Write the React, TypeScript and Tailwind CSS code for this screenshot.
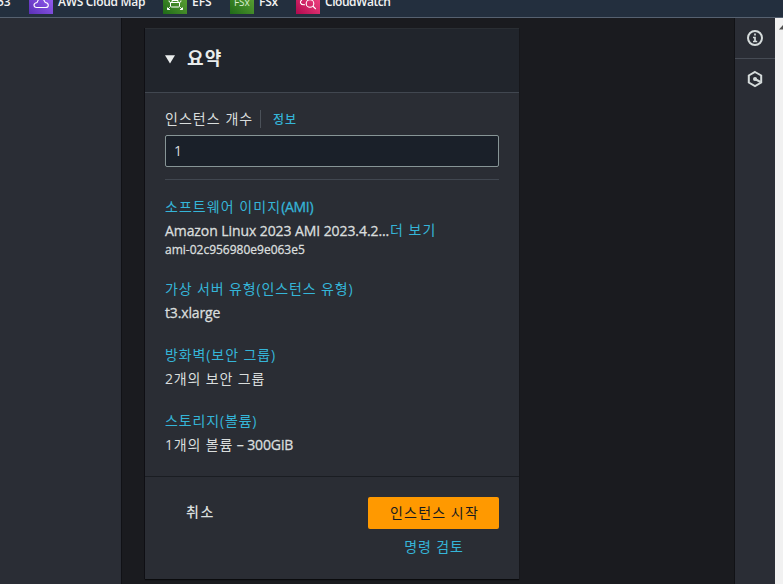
import React from "react";

const latin = "font-['Open_Sans','Noto_Sans_CJK_KR',sans-serif]";
const hangul = "font-['Noto_Sans_CJK_KR',sans-serif]";
const sturdy = "[-webkit-text-stroke:0.3px_currentColor]";

function CloudMapIcon() {
  return (
    <svg width="24" height="24" viewBox="0 0 24 24" fill="none" stroke="#fff" strokeWidth="1.1">
      <defs>
        <linearGradient id="purple" x1="0" y1="1" x2="1" y2="0">
          <stop stopColor="#5a30b5" />
          <stop offset="1" stopColor="#a066ff" />
        </linearGradient>
      </defs>
      <rect width="24" height="24" fill="url(#purple)" stroke="none" />
      <path d="M9.500 9.500 8 12.500c-2 .4-3 1.300-3 2.600 0 1.500 1 2.400 2.700 2.400h9c1.600 0 2.600-.9 2.600-2.300 0-1.500-1-2.500-3-2.700l-1.800-3" />
    </svg>
  );
}

function EfsIcon() {
  return (
    <svg width="24" height="24" viewBox="0 0 24 24" fill="none" stroke="#fff" strokeWidth="1">
      <rect width="24" height="24" fill="url(#green)" stroke="none" />
      <path d="M7.500 12.500v3.500q0 1 1 1h7q1 0 1-1v-3.500zM6 10.500q0 2 1.500 2M18 10.500q0 2-1.500 2M9 10.500h6v2M9 10.500v2M4.500 17.500v2H7M4.500 19.500l2.300-2.300M19.500 17.500v2H17M19.500 19.500l-2.300-2.300" />
    </svg>
  );
}

function FsxIcon() {
  return (
    <div className="relative h-6 w-6">
      <svg width="24" height="24" viewBox="0 0 24 24">
        <defs>
          <linearGradient id="green" x1="0" y1="1" x2="1" y2="0">
            <stop stopColor="#1f6a18" />
            <stop offset="1" stopColor="#66aa38" />
          </linearGradient>
        </defs>
        <rect width="24" height="24" fill="url(#green)" />
      </svg>
      <span className="absolute left-[4px] top-[3px] text-[10px] leading-[18px] tracking-[-0.1px] text-[#d9edcf]">FSx</span>
    </div>
  );
}

function CloudWatchIcon() {
  return (
    <svg width="24" height="24" viewBox="0 0 24 24" fill="none" stroke="#fff" strokeWidth="1.1">
      <defs>
        <linearGradient id="pink" x1="0" y1="1" x2="1" y2="0">
          <stop stopColor="#b0084d" />
          <stop offset="1" stopColor="#ff4f8b" />
        </linearGradient>
      </defs>
      <rect width="24" height="24" fill="url(#pink)" stroke="none" />
      <circle cx="14" cy="13.500" r="3.800" />
      <path d="m16.800 16 3 3M6 10c-1.300.7-1.800 1.700-1.400 3 .4 1.300 1.400 1.800 3.400 1.800h1" />
    </svg>
  );
}

function Shortcut({ icon, label, w, t }: { icon: React.ReactNode; label: string; w: string; t: string }) {
  return (
    <div className={`flex shrink-0 gap-[5px] ${w}`}>
      <div className="h-6 w-6 shrink-0">{icon}</div>
      <span className={`mt-[3px] whitespace-nowrap text-[12px] font-semibold leading-[18px] text-[#f2f3f3] ${t}`}>{label}</span>
    </div>
  );
}

function Link({ children, t }: { children: React.ReactNode; t: string }) {
  return <a className={`whitespace-nowrap text-[#35b5d8] ${t}`}>{children}</a>;
}

function Item({ title, h, tt, children }: { title: string; h: string; tt: string; children: React.ReactNode }) {
  return (
    <div className={`flex flex-col text-[14px] ${h}`}>
      <div className="h-[24px] leading-[22px]"><Link t={tt}>{title}</Link></div>
      <div className="whitespace-nowrap leading-[22px]">{children}</div>
    </div>
  );
}

export default function App() {
  return (
    <div className={`flex h-[584px] w-[783px] flex-col overflow-hidden bg-[#1a1b1f] text-[#d9dddd] ${latin}`}>
      <header className="h-[18px] shrink-0 overflow-hidden border-b border-[#566170] bg-[#232f3e]">
        <div className="-mt-[10px] flex">
          <span className="mt-[3px] w-[29px] shrink-0 -indent-[3px] text-[12px] font-semibold leading-[18px] text-[#f2f3f3]">53</span>
          <Shortcut icon={<CloudMapIcon />} label="AWS Cloud Map" w="w-[134px]" t="tracking-[-0.3px]" />
          <Shortcut icon={<EfsIcon />} label="EFS" w="w-[67px]" t="" />
          <Shortcut icon={<FsxIcon />} label="FSx" w="w-[66px]" t="tracking-[-0.2px]" />
          <Shortcut icon={<CloudWatchIcon />} label="CloudWatch" w="w-[120px]" t="tracking-[-0.45px]" />
        </div>
      </header>

      <div className="flex min-h-0 flex-1">
        <aside className="w-[122px] shrink-0 border-r border-[#111216] bg-[#2a2d35]" />
        <main className="flex-1 px-[23px] pt-[10px]">
          <section className="flex h-[551px] w-[374px] flex-col bg-[#2a2d34] shadow-[0_1px_1px_0_#0a0b0d,-1px_0_0_0_#111216]">
            <div className="flex h-[65px] shrink-0 border-b border-t border-b-[#414750] border-t-[#2a2e33] bg-[#21252c] pl-[20px]">
              <svg className="mt-[26px]" width="10" height="9" viewBox="0 0 10 9"><path d="M0 .3h10L5 8.500z" fill="#eaeded" /></svg>
              <h2 className={`ml-[12px] mt-[15px] text-[18px] font-bold leading-[26px] tracking-[1.3px] text-[#eaeded] ${hangul}`}>요약</h2>
            </div>

            <div className="flex flex-1 flex-col px-[20px]">
              <div className="mt-[15px] flex h-[22px] items-center">
                <span className="w-[95px] whitespace-nowrap text-[14px] leading-[22px] tracking-[1.05px]">인스턴스 개수</span>
                <span className="h-[18px] border-l border-[#4b5159] pl-[12px] pt-px text-[12px] font-medium leading-[18px]"><Link t="tracking-[1px]">정보</Link></span>
              </div>
              <input readOnly value="1" className="mt-[5px] h-[32px] shrink-0 rounded-[2px] border border-[#879596] bg-[#1a2029] px-[8px] pb-[2px] text-[14px] text-[#d9dddd] outline-none" />
              <div className="mt-[12px] h-px shrink-0 bg-[#414750]" />

              <div className="mt-[16px] h-[82px] text-[14px]">
                <div className="h-[24px] leading-[22px]"><Link t="tracking-[1.05px]">소프트웨어 이미지<span className={`tracking-[-0.3px] ${sturdy}`}>(AMI)</span></Link></div>
                <div className="flex h-[20px] whitespace-nowrap leading-[22px]"><span className={`w-[225px] shrink-0 tracking-[-0.08px] ${sturdy}`}>Amazon Linux 2023 AMI 2023.4.2...</span><Link t="tracking-[1px] -mt-px">더 보기</Link></div>
                <div className={`text-[12px] leading-[20px] ${sturdy}`}>ami-02c956980e9e063e5</div>
              </div>
              <Item title="가상 서버 유형(인스턴스 유형)" h="h-[66px]" tt="tracking-[0.87px]">
                <span className={`tracking-[-0.15px] ${sturdy}`}>t3.xlarge</span>
              </Item>
              <Item title="방화벽(보안 그룹)" h="h-[66px]" tt="tracking-[0.9px]">
                <span className="tracking-[0.85px]">2개의 보안 그룹</span>
              </Item>
              <Item title="스토리지(볼륨)" h="h-[46px]" tt="tracking-[0.85px]">
                <span className="tracking-[0.85px]">1개의 볼륨</span><span className={`tracking-[-0.12px] ${sturdy}`}> – 300GiB</span>
              </Item>
            </div>

            <footer className="flex h-[103px] shrink-0 justify-between border-t border-[#1a1d22] pl-[41px] pr-[20px] pt-[20px] text-[14px]">
              <button className={`h-[32px] pb-[3px] font-medium tracking-[1.5px] ${hangul}`}>취소</button>
              <div className="flex w-[131px] flex-col items-center">
                <button className={`h-[32px] w-full rounded-[2px] bg-[#ff9900] pb-[2px] pl-[2px] font-normal tracking-[1.25px] text-[#16191f] ${hangul}`}>인스턴스 시작</button>
                <span className="mt-[7px] pl-px leading-[22px]"><Link t="tracking-[0.9px]">명령 검토</Link></span>
              </div>
            </footer>
          </section>
        </main>
        <aside className="w-[41px] shrink-0 border-l border-[#111216] bg-[#2a2d35]">
          <div className="flex h-[41px] items-center justify-center border-b border-[#464b54]">
            <svg width="16" height="16" viewBox="0 0 16 16" fill="none" stroke="#d5dbdb" strokeWidth="2">
              <circle cx="8" cy="8" r="7" />
              <path d="M8 3.500v2M6 7.500h2V12M6 11.500h4.200" strokeWidth="1.700" />
            </svg>
          </div>
          <div className="flex h-[40px] items-center justify-center">
            <svg width="16" height="18" viewBox="0 0 16 18" fill="none" stroke="#d5dbdb" strokeWidth="2">
              <path d="m8 2 6.200 3.500v7L8 16l-6.200-3.500v-7z" />
              <circle cx="8" cy="9" r="2" fill="#d5dbdb" stroke="none" />
              <path d="m8 9 5.500 3" />
            </svg>
          </div>
        </aside>
        <div className="w-[8px] shrink-0 overflow-hidden bg-[#f1f1f1]">
          <svg className="ml-[4px] mt-[7px]" width="8" height="5" viewBox="0 0 8 5"><path d="m4 0 4 4.500H0z" fill="#505050" /></svg>
        </div>
      </div>
    </div>
  );
}
